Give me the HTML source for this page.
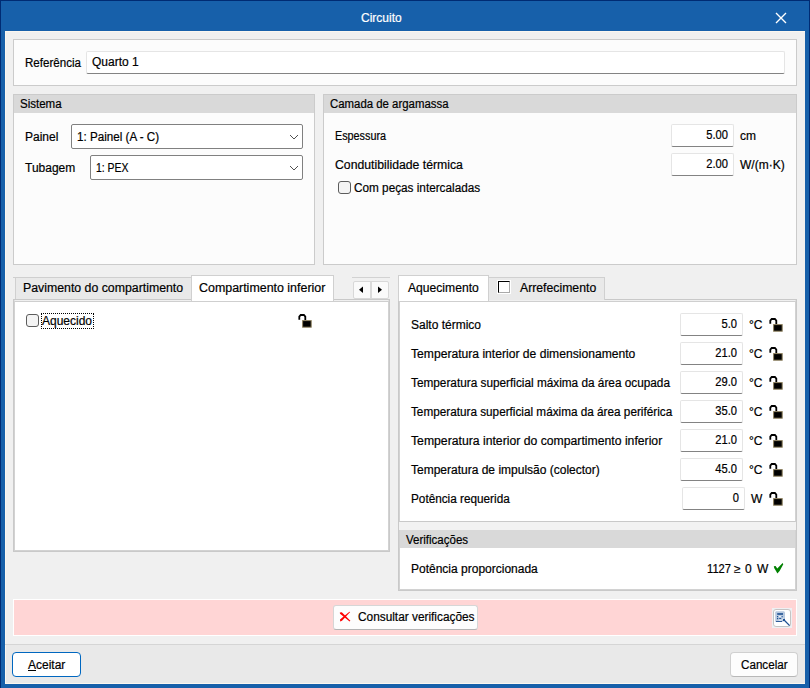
<!DOCTYPE html>
<html><head><meta charset="utf-8">
<style>
*{box-sizing:border-box;margin:0;padding:0}
html,body{width:810px;height:688px;overflow:hidden;background:#1760aa}
body{position:relative;font-family:"Liberation Sans",sans-serif;font-size:12px;color:#000}
.a{position:absolute}
.t{position:absolute;white-space:nowrap;line-height:14px;-webkit-text-stroke:0.2px currentColor}
.box{position:absolute;background:#fcfcfc;border:1px solid #cbcbcb}
.hdr{position:absolute;left:0;top:0;right:0;height:18px;background:#d9d9d9}
.inp{position:absolute;background:#fff;border:1px solid #e5e5e5;border-bottom:1px solid #838383;border-radius:2px}
.combo{position:absolute;background:#fff;border:1px solid #808080;border-radius:2px}
.chk{position:absolute;width:13px;height:13px;border:1px solid #5c5c5c;border-radius:3px;background:#f4f4f4}
.num{position:absolute;text-align:right;white-space:nowrap;line-height:14px;-webkit-text-stroke:0.2px currentColor;transform:scaleX(0.93);transform-origin:100% 0}
</style></head><body>
<div class="a" style="left:0;top:0;width:810px;height:688px;background:#1760aa;border-left:1px solid #002b73;border-top:1px solid #002b73;border-right:1px solid #002b73"></div>

<div class="t" style="left:361px;top:11px;transform:scaleX(1.0);transform-origin:0 0;color:#fff">Circuito</div>
<svg class="a" style="left:775px;top:12px" width="12" height="12" viewBox="0 0 12 12"><path d="M1 1L11 11M11 1L1 11" stroke="#fff" stroke-width="1.4"/></svg>
<div class="a" style="left:5px;top:31px;width:800px;height:653px;background:#f0f0f0;border-left:1px solid #fbf7f0;border-top:1px solid #fbf7f0;border-bottom:1px solid #fbf7f0"></div>
<div class="box" style="left:13px;top:39px;width:784px;height:47px"></div>
<div class="t" style="left:25px;top:56px;transform:scaleX(0.965);transform-origin:0 0">Referência</div>
<div class="inp" style="left:86px;top:51px;width:699px;height:23px"></div>
<div class="t" style="left:92px;top:55px">Quarto 1</div>
<div class="box" style="left:13px;top:94px;width:302px;height:171px"><div class="hdr"></div></div>
<div class="t" style="left:20px;top:97px;transform:scaleX(0.96);transform-origin:0 0">Sistema</div>
<div class="t" style="left:25px;top:130px">Painel</div>
<div class="combo" style="left:71px;top:124px;width:232px;height:25px"></div>
<div class="t" style="left:77px;top:130px;transform:scaleX(0.97);transform-origin:0 0">1: Painel (A - C)</div>
<svg class="a" style="left:289px;top:134px" width="10" height="6"><path d="M1 1L5 5L9 1" fill="none" stroke="#505050" stroke-width="1"/></svg>
<div class="t" style="left:25px;top:161px">Tubagem</div>
<div class="combo" style="left:90px;top:155px;width:213px;height:25px"></div>
<div class="t" style="left:96px;top:161px;transform:scaleX(0.87);transform-origin:0 0">1: PEX</div>
<svg class="a" style="left:289px;top:165px" width="10" height="6"><path d="M1 1L5 5L9 1" fill="none" stroke="#505050" stroke-width="1"/></svg>
<div class="box" style="left:323px;top:94px;width:474px;height:171px"><div class="hdr"></div></div>
<div class="t" style="left:330px;top:97px;transform:scaleX(0.95);transform-origin:0 0">Camada de argamassa</div>
<div class="t" style="left:335px;top:129px;transform:scaleX(0.9);transform-origin:0 0">Espessura</div>
<div class="inp" style="left:671px;top:124px;width:63px;height:23px"></div>
<div class="num" style="left:671px;top:128px;width:57px">5.00</div>
<div class="t" style="left:740px;top:129px">cm</div>
<div class="t" style="left:335px;top:158px;transform:scaleX(1.02);transform-origin:0 0">Condutibilidade térmica</div>
<div class="inp" style="left:671px;top:153px;width:63px;height:23px"></div>
<div class="num" style="left:671px;top:157px;width:57px">2.00</div>
<div class="t" style="left:740px;top:158px">W/(m·K)</div>
<div class="chk" style="left:338px;top:181px"></div>
<div class="t" style="left:354px;top:181px;transform:scaleX(0.98);transform-origin:0 0">Com peças intercaladas</div>
<div class="a" style="left:13px;top:277px;width:179px;height:23px;background:#f0f0f0;border-top:1px solid #cfcfcf"></div>
<div class="a" style="left:15px;top:278px;width:177px;height:22px;background:#e9e9e9;border-left:1px solid #d0d0d0;border-right:1px solid #d0d0d0"></div>
<div class="t" style="left:23px;top:281px;transform:scaleX(1.026);transform-origin:0 0">Pavimento do compartimento</div>
<div class="a" style="left:13px;top:299px;width:377px;height:253px;background:#fff;border:1px solid #c9c9c9"></div>
<div class="a" style="left:14px;top:300px;width:375px;height:251px;background:#fff;border-top:1px solid #f0f0f0;border-left:1px solid #d2d2d2;border-right:1px solid #d2d2d2;border-bottom:1px solid #d2d2d2"></div>
<div class="a" style="left:15px;top:301px;width:373px;height:1px;background:#cfcfcf"></div>
<div class="a" style="left:191px;top:275px;width:143px;height:26px;background:#fff;border:1px solid #d0d0d0;border-bottom:none"></div>
<div class="t" style="left:199px;top:281px;transform:scaleX(1.035);transform-origin:0 0">Compartimento inferior</div>
<div class="a" style="left:352px;top:277px;width:38px;height:1px;background:#d2d2d2"></div>
<div class="a" style="left:353px;top:281px;width:36px;height:18px;background:#fafafa;border:1px solid #d8d8d8;border-radius:2px"></div>
<div class="a" style="left:370px;top:282px;width:2px;height:16px;background:#dadada"></div>
<svg class="a" style="left:358px;top:286px" width="6" height="8"><path d="M5 0.5V7L1 3.75Z" fill="#000"/></svg>
<svg class="a" style="left:377px;top:286px" width="6" height="8"><path d="M1 0.5V7L5 3.75Z" fill="#000"/></svg>
<div class="chk" style="left:26px;top:314px"></div>
<div class="a" style="left:41px;top:313px;width:53px;height:16px;border:1px dotted #000"></div>
<div class="t" style="left:42px;top:314px">Aquecido</div>
<svg class="a" style="left:297px;top:313px" width="15" height="15" viewBox="0 0 15 15"><path d="M2.3 6.8V3.6L3.7 2H6.9L8.3 3.6V7.2" fill="none" stroke="#000" stroke-width="1.8"/><rect x="5.6" y="7.6" width="8.6" height="6.6" fill="#000" stroke="#8f8260" stroke-width="1"/></svg>
<div class="a" style="left:398px;top:299px;width:399px;height:292px;background:#f2f2f2;border:1px solid #c9c9c9"></div>
<div class="a" style="left:399px;top:300px;width:397px;height:222px;background:#fff;border-top:1px solid #f0f0f0;border-left:1px solid #d2d2d2;border-right:1px solid #d2d2d2;border-bottom:1px solid #c9c9c9"></div>
<div class="a" style="left:400px;top:301px;width:395px;height:1px;background:#cfcfcf"></div>
<div class="a" style="left:488px;top:277px;width:117px;height:23px;background:#e9e9e9;border:1px solid #d0d0d0;border-bottom:none"></div>
<div class="a" style="left:498px;top:281px;width:12px;height:12px;border:1px solid #000;border-right-color:#a9a9a9;border-bottom-color:#a9a9a9;background:#fff;box-shadow:0 0 0 1px #fff"></div>
<div class="t" style="left:520px;top:281px;transform:scaleX(1.02);transform-origin:0 0">Arrefecimento</div>
<div class="a" style="left:398px;top:275px;width:91px;height:26px;background:#fff;border:1px solid #d0d0d0;border-bottom:none"></div>
<div class="t" style="left:408px;top:281px;transform:scaleX(1.01);transform-origin:0 0">Aquecimento</div>
<div class="t" style="left:411px;top:318px">Salto térmico</div>
<div class="inp" style="left:680px;top:313px;width:63px;height:23px"></div>
<div class="num" style="left:680px;top:317px;width:57px">5.0</div>
<div class="t" style="left:749px;top:318px">°C</div>
<svg class="a" style="left:768px;top:317px" width="15" height="15" viewBox="0 0 15 15"><path d="M2.3 6.8V3.6L3.7 2H6.9L8.3 3.6V7.2" fill="none" stroke="#000" stroke-width="1.8"/><rect x="5.6" y="7.6" width="8.6" height="6.6" fill="#000" stroke="#8f8260" stroke-width="1"/></svg>
<div class="t" style="left:411px;top:347px;transform:scaleX(1.01);transform-origin:0 0">Temperatura interior de dimensionamento</div>
<div class="inp" style="left:680px;top:342px;width:63px;height:23px"></div>
<div class="num" style="left:680px;top:346px;width:57px">21.0</div>
<div class="t" style="left:749px;top:347px">°C</div>
<svg class="a" style="left:768px;top:346px" width="15" height="15" viewBox="0 0 15 15"><path d="M2.3 6.8V3.6L3.7 2H6.9L8.3 3.6V7.2" fill="none" stroke="#000" stroke-width="1.8"/><rect x="5.6" y="7.6" width="8.6" height="6.6" fill="#000" stroke="#8f8260" stroke-width="1"/></svg>
<div class="t" style="left:411px;top:376px;transform:scaleX(0.983);transform-origin:0 0">Temperatura superficial máxima da área ocupada</div>
<div class="inp" style="left:680px;top:371px;width:63px;height:23px"></div>
<div class="num" style="left:680px;top:375px;width:57px">29.0</div>
<div class="t" style="left:749px;top:376px">°C</div>
<svg class="a" style="left:768px;top:375px" width="15" height="15" viewBox="0 0 15 15"><path d="M2.3 6.8V3.6L3.7 2H6.9L8.3 3.6V7.2" fill="none" stroke="#000" stroke-width="1.8"/><rect x="5.6" y="7.6" width="8.6" height="6.6" fill="#000" stroke="#8f8260" stroke-width="1"/></svg>
<div class="t" style="left:411px;top:405px;transform:scaleX(0.979);transform-origin:0 0">Temperatura superficial máxima da área periférica</div>
<div class="inp" style="left:680px;top:400px;width:63px;height:23px"></div>
<div class="num" style="left:680px;top:404px;width:57px">35.0</div>
<div class="t" style="left:749px;top:405px">°C</div>
<svg class="a" style="left:768px;top:404px" width="15" height="15" viewBox="0 0 15 15"><path d="M2.3 6.8V3.6L3.7 2H6.9L8.3 3.6V7.2" fill="none" stroke="#000" stroke-width="1.8"/><rect x="5.6" y="7.6" width="8.6" height="6.6" fill="#000" stroke="#8f8260" stroke-width="1"/></svg>
<div class="t" style="left:411px;top:434px;transform:scaleX(1.018);transform-origin:0 0">Temperatura interior do compartimento inferior</div>
<div class="inp" style="left:680px;top:429px;width:63px;height:23px"></div>
<div class="num" style="left:680px;top:433px;width:57px">21.0</div>
<div class="t" style="left:749px;top:434px">°C</div>
<svg class="a" style="left:768px;top:433px" width="15" height="15" viewBox="0 0 15 15"><path d="M2.3 6.8V3.6L3.7 2H6.9L8.3 3.6V7.2" fill="none" stroke="#000" stroke-width="1.8"/><rect x="5.6" y="7.6" width="8.6" height="6.6" fill="#000" stroke="#8f8260" stroke-width="1"/></svg>
<div class="t" style="left:411px;top:463px">Temperatura de impulsão (colector)</div>
<div class="inp" style="left:680px;top:458px;width:63px;height:23px"></div>
<div class="num" style="left:680px;top:462px;width:57px">45.0</div>
<div class="t" style="left:749px;top:463px">°C</div>
<svg class="a" style="left:768px;top:462px" width="15" height="15" viewBox="0 0 15 15"><path d="M2.3 6.8V3.6L3.7 2H6.9L8.3 3.6V7.2" fill="none" stroke="#000" stroke-width="1.8"/><rect x="5.6" y="7.6" width="8.6" height="6.6" fill="#000" stroke="#8f8260" stroke-width="1"/></svg>
<div class="t" style="left:411px;top:492px;transform:scaleX(0.98);transform-origin:0 0">Potência requerida</div>
<div class="inp" style="left:682px;top:487px;width:63px;height:23px"></div>
<div class="num" style="left:682px;top:491px;width:57px">0</div>
<div class="t" style="left:751px;top:492px">W</div>
<svg class="a" style="left:768px;top:491px" width="15" height="15" viewBox="0 0 15 15"><path d="M2.3 6.8V3.6L3.7 2H6.9L8.3 3.6V7.2" fill="none" stroke="#000" stroke-width="1.8"/><rect x="5.6" y="7.6" width="8.6" height="6.6" fill="#000" stroke="#8f8260" stroke-width="1"/></svg>
<div class="a" style="left:399px;top:530px;width:397px;height:60px;background:#fff;border-left:1px solid #d2d2d2;border-right:1px solid #d2d2d2;border-bottom:1px solid #d2d2d2"><div class="hdr" style="height:18px"></div></div>
<div class="t" style="left:406px;top:533px;transform:scaleX(0.96);transform-origin:0 0">Verificações</div>
<div class="t" style="left:411px;top:562px">Potência proporcionada</div>
<div class="t" style="left:707px;top:562px;transform:scaleX(0.93);transform-origin:0 0">1127</div>
<div class="t" style="left:734px;top:562px">≥</div>
<div class="t" style="left:745px;top:562px">0</div>
<div class="t" style="left:757px;top:562px">W</div>
<svg class="a" style="left:770px;top:560px" width="16" height="16" viewBox="0 0 16 16"><path d="M3.8 6.2L4.3 8.2L6 11L7.4 13.6L9.6 11L13.3 4.2L12.6 2.9L7.3 8.6L5.6 6Z" fill="#008000"/></svg>
<div class="a" style="left:13px;top:599px;width:784px;height:37px;background:#ffd5d5;border:1px solid #fff"></div>
<div class="a" style="left:333px;top:605px;width:145px;height:25px;background:#fdfdfd;border:1px solid #d6d6d6;border-bottom-color:#b4b4b4;border-radius:3px"></div>
<svg class="a" style="left:339px;top:611px" width="13" height="12" viewBox="0 0 13 12"><path d="M0.8 1.6L2.8 1.2L11.4 9.8L10.6 10.4L1 2.8Z" fill="#f00"/><path d="M11.2 1L10.4 0.8L1 8.4L1.2 10.4L3 9.8Z" fill="#f00"/></svg>
<div class="t" style="left:358px;top:610px;transform:scaleX(0.987);transform-origin:0 0">Consultar verificações</div>
<div class="a" style="left:772px;top:608px;width:20px;height:20px;background:#eef0f3"></div>
<div class="a" style="left:773px;top:609px;width:18px;height:18px;background:#fff;border:1px solid #c4c4c4;border-radius:3px"></div>
<svg class="a" style="left:772px;top:608px" width="20" height="20" viewBox="0 0 20 20">
<path d="M4 3.3H12L13 4.3V13.8H3.2V4.3Z" fill="#b8c9df"/>
<rect x="5.2" y="5.2" width="5.8" height="1.6" fill="#1d4f91"/>
<rect x="5" y="8" width="1.2" height="1.2" fill="#1d4f91"/><rect x="6.8" y="8" width="2" height="1" fill="#eef3fa"/><rect x="9.6" y="8" width="1.2" height="1.2" fill="#3d6aa6"/>
<rect x="5" y="10" width="1.2" height="1.2" fill="#1d4f91"/><rect x="7.2" y="10.1" width="2" height="1" fill="#1d4f91"/>
<rect x="6.8" y="11.6" width="2.6" height="1" fill="#eef3fa"/>
<rect x="4" y="13.1" width="6" height="0.9" fill="#1d4f91"/>
<path d="M10.6 10.6L14 14" stroke="#fff" stroke-width="2.6"/>
<path d="M11.8 11.8L17.6 17.6" stroke="#1d4f91" stroke-width="1.3"/>
<rect x="10.8" y="10.8" width="2.2" height="2.2" fill="#1d4f91"/>
</svg>
<div class="a" style="left:5px;top:644px;width:800px;height:1px;background:#d5d5d5"></div>
<div class="a" style="left:6px;top:645px;width:799px;height:38px;background:#e9e9e9"></div>
<div class="a" style="left:12px;top:652px;width:69px;height:25px;background:#fff;border:1px solid #0067c0;border-radius:4px"></div>
<div class="t" style="left:28px;top:658px"><u>A</u>ceitar</div>
<div class="a" style="left:730px;top:652px;width:68px;height:25px;background:#fdfdfd;border:1px solid #d0d0d0;border-bottom-color:#b8b8b8;border-radius:4px"></div>
<div class="t" style="left:741px;top:658px;transform:scaleX(0.97);transform-origin:0 0">Cancelar</div>
</body></html>
